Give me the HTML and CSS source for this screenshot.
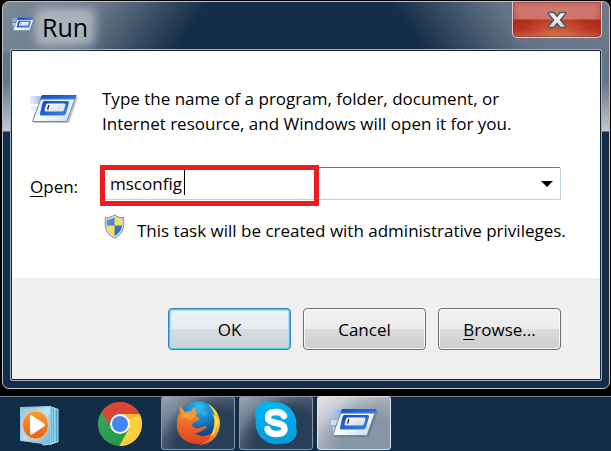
FILE: index.html
```html
<!DOCTYPE html>
<html lang="en">
<head>
<meta charset="utf-8">
<title>Run</title>
<link rel="stylesheet" href="styles.css">
</head>
<body>
<svg class="defs" aria-hidden="true">
  <defs>
    <linearGradient id="blue" x1="0" y1="0" x2="1" y2="1"><stop offset="0" stop-color="#0d49b5"/><stop offset="1" stop-color="#3b86ee"/></linearGradient>
    <linearGradient id="pane" x1="0" y1="0" x2="1" y2="1"><stop offset="0" stop-color="#d4e5fa"/><stop offset=".55" stop-color="#f7fbff"/><stop offset="1" stop-color="#b9d3f4"/></linearGradient>
    <linearGradient id="trail" x1="0" y1="0" x2="1" y2="0"><stop offset="0" stop-color="#b7d4fa" stop-opacity=".35"/><stop offset="1" stop-color="#6fa5ef"/></linearGradient>
    <linearGradient id="field" x1="0" y1="0" x2="1" y2="1"><stop offset="0" stop-color="#fff"/><stop offset="1" stop-color="#d2d5dc"/></linearGradient>
  </defs>
  <symbol id="run-icon" viewBox="0 0 48 30">
    <path d="M0 2h14l-3 8H0z" fill="url(#trail)"/>
    <path d="M1 12h9l-2 5H1zM3 19h5l-3 6H3z" fill="#dceafa" opacity=".8"/>
    <path d="M14 3h34L39 29H4z" fill="#444" opacity=".3"/>
    <path d="M12 1.500h34L37 27.500H2.500z" fill="url(#pane)" stroke="#7c8795"/>
    <path d="M12 1h34.500L45 5.500H10.500z" fill="url(#blue)"/>
    <path d="M14.500 7H37q2.500 0 2 2l-3 10.500q-.5 2-3 2H12q-2.500 0-2-2L12.500 9q.5-2 2-2z" fill="url(#blue)"/>
    <path d="M17.500 9.500H34q1.800 0 1.500 1.500l-1.500 5q-.4 1.500-2.200 1.500H16q-1.800 0-1.500-1.500L16 11q.4-1.500 1.500-1.500z" fill="url(#field)"/>
    <path d="M18.800 11l-1.200 4.500" stroke="#222" stroke-width="1.300"/>
  </symbol>
</svg>
<main class="window">
  <header class="titlebar">
    <svg class="title-icon" aria-hidden="true"><use href="#run-icon"/></svg>
    <h1 class="title">Run</h1>
    <button class="close" type="button" aria-label="Close">
      <svg viewBox="0 0 20 18" aria-hidden="true">
        <defs><linearGradient id="cross" x1="0" y1="0" x2="0" y2="1"><stop offset="0" stop-color="#fff"/><stop offset="1" stop-color="#cfd0d4"/></linearGradient></defs>
        <path d="M1.500 1.500h5.500l3 4 3-4h5.500v1.500L13.500 9l5 6v1.500H13l-3-4-3 4H1.500V15l5-6-5-6z" fill="url(#cross)" stroke="#4d5468" stroke-width="1.400" stroke-linejoin="round"/>
      </svg>
    </button>
  </header>
  <form class="client">
    <div class="content">
      <svg class="program-icon" aria-hidden="true"><use href="#run-icon"/></svg>
      <p class="message">Type the name of a program, folder, document, or<br>Internet resource, and Windows will open it for you.</p>
      <label class="open-label" for="command"><u>O</u>pen:</label>
      <div class="combo">
        <input id="command" type="text" value="msconfig" spellcheck="false">
        <span class="caret"></span>
        <button class="drop" type="button" aria-label="Show recent commands"><svg viewBox="0 0 12 6" aria-hidden="true"><path d="M0 0h12L6 6z"/></svg></button>
        <span class="highlight"></span>
      </div>
      <p class="privileges">
        <svg class="shield" viewBox="0 0 22 26" aria-hidden="true">
          <defs><clipPath id="shield-clip"><path d="M11 3c2 2 5 3 8 3 .5 8-1 13-8 17C4 19 2.500 14 3 6c3 0 6-1 8-3z"/></clipPath>
          <linearGradient id="shield-blue" x1="0" y1="0" x2="1" y2="1"><stop offset="0" stop-color="#6ba7ea"/><stop offset="1" stop-color="#1654b7"/></linearGradient></defs>
          <path d="M11 .8c3 2.500 6 3 9.500 3C21.500 14 20 21 11 25.200 2 21 .5 14 1.500 3.800 5 3.800 8 3.300 11 .8z" fill="#d5d9dd" stroke="#82888e"/>
          <g clip-path="url(#shield-clip)"><path d="M0 0h22v26H0z" fill="#f8dc5c"/><path d="M0 0h11v12H0zM11 12h11v14H11z" fill="url(#shield-blue)"/></g>
        </svg>
        <span>This task will be created with administrative privileges.</span>
      </p>
    </div>
    <footer class="actions">
      <button class="btn btn-default" type="button">OK</button>
      <button class="btn" type="button">Cancel</button>
      <button class="btn" type="button"><u>B</u>rowse...</button>
    </footer>
  </form>
</main>
<nav class="taskbar" aria-label="Taskbar">
  <button class="task" type="button" aria-label="Media Player">
    <svg class="app" viewBox="0 0 44 44" aria-hidden="true">
      <defs><linearGradient id="glass" x1="0" y1="0" x2="1" y2="1"><stop offset="0" stop-color="#88b9d3"/><stop offset=".5" stop-color="#b9deec"/><stop offset="1" stop-color="#72b7d6"/></linearGradient>
      <linearGradient id="orange" x1="0" y1="0" x2="0" y2="1"><stop offset="0" stop-color="#ff9d2e"/><stop offset="1" stop-color="#ed5c12"/></linearGradient></defs>
      <path d="M28 6l10 1v33l-10 1z" fill="#4ba8d0" stroke="#a8def0"/>
      <path d="M25 5l10 1v35l-10 1z" fill="#63b8da" stroke="#c3ebf6"/>
      <path d="M22 5h10v37l-9 1z" fill="#368dbb" stroke="#b8e4f1"/>
      <path d="M.5 5.500l30-1v38l-30-4z" fill="url(#glass)" stroke="#8bd0e6"/>
      <path d="M1 7l29-1v6L1 31z" fill="#fff" opacity=".15"/>
      <ellipse cx="15.500" cy="23" rx="13" ry="14" fill="url(#orange)" stroke="#e8c9a6"/>
      <path d="M10 14.500q0-2 2-1l12 8q2 1.500 0 3l-12 8q-2 1-2-1z" fill="#fff"/>
    </svg>
  </button>
  <button class="task" type="button" aria-label="Chrome">
    <svg class="app" viewBox="0 0 44 44" aria-hidden="true">
      <defs><linearGradient id="chrome-green" x1="0" y1="0" x2="1" y2="1"><stop offset="0" stop-color="#43a85b"/><stop offset="1" stop-color="#119448"/></linearGradient></defs>
      <circle cx="22" cy="22" r="22" fill="url(#chrome-green)"/>
      <path d="M22 12h19.600A22 22 0 0 1 21.300 44L30.700 27z" fill="#ffcd40"/>
      <path d="M3.800 9.700A22 22 0 0 1 41.600 12H22a10 10 0 0 0-8.700 15z" fill="#db4437"/>
      <path d="M22 12h19.600l.8 2L30 17z" fill="#b96b20" opacity=".2"/>
      <circle cx="22" cy="22" r="10" fill="#fff"/><circle cx="22" cy="22" r="8" fill="#4285f4"/>
    </svg>
  </button>
  <button class="task open" type="button" aria-label="Firefox">
    <svg class="app" viewBox="0 0 44 44" aria-hidden="true">
      <defs><radialGradient id="globe" cx=".5" cy=".1" r=".9"><stop offset="0" stop-color="#22b8ee"/><stop offset=".5" stop-color="#147bbf"/><stop offset="1" stop-color="#0a2e68"/></radialGradient>
      <linearGradient id="fox" x1="0" y1="0" x2="0" y2="1"><stop offset="0" stop-color="#f5a33b"/><stop offset=".4" stop-color="#ed722b"/><stop offset="1" stop-color="#db421e"/></linearGradient>
      <linearGradient id="tail" x1="0" y1="0" x2="0" y2="1"><stop offset="0" stop-color="#ffdc3c"/><stop offset=".55" stop-color="#fcbc29"/><stop offset="1" stop-color="#e8561e"/></linearGradient></defs>
      <circle cx="23" cy="20" r="19.500" fill="url(#globe)"/>
      <path d="M20 5q5-3 10 0l-2 4 4 3-2 5-5-4-6-1z" fill="#4fc1e9" opacity=".35"/>
      <path d="M32 3c7 4 11 10 12 18 0 14-9 23-22 23 9-3 14-9 16-18 1-7 0-10-2-14l3 3q-2-7-7-12z" fill="url(#tail)"/>
      <path d="M38 13c3 9 0 18-6 24l6-4 4-12z" fill="#fff37a" opacity=".7"/>
      <path d="M4 5l5 6q4-1 6-1 2-3 4-4 0 4 2 6l-1 3q4 1 3 4-3 2-6 3l-1 3q5 4 10 1 4-2 5 0-1 2-4 3-4 4-9 3 7 5 14 2 3-1 5-3-5 12-16 12C9 43 0 34 1 23 1 16 3 13 4 12q-1-4 0-7z" fill="url(#fox)"/>
      <path d="M5 13q5-2 11 0 3-1 4-3l-1 6q-3 3-6 3-4-3-8-2z" fill="#f8b34b" opacity=".5"/>
    </svg>
  </button>
  <button class="task open" type="button" aria-label="Skype">
    <svg class="app" viewBox="0 0 44 44" aria-hidden="true">
      <defs><linearGradient id="sky" x1="0" y1="0" x2="0" y2="1"><stop offset="0" stop-color="#00b5f5"/><stop offset="1" stop-color="#079bd9"/></linearGradient></defs>
      <path d="M2 18A12.500 12.500 0 0 1 18 1.500 21 21 0 0 1 42 26 12.500 12.500 0 0 1 28 42.500 21 21 0 0 1 2 18z" fill="url(#sky)"/>
      <path d="M30 15q-2-4-8-4-8 0-8 5.500 0 4 8 5.500 8.500 1.500 8.500 5.500 0 5.500-8.500 5.500-7 0-8.500-5" fill="none" stroke="#fff" stroke-width="6.500" stroke-linecap="round"/>
    </svg>
  </button>
  <button class="task open active" type="button" aria-label="Run"><svg class="run-task" aria-hidden="true"><use href="#run-icon"/></svg></button>
</nav>
</body>
</html>
```
FILE: styles.css
```css
* { box-sizing: border-box; }
body {
  margin: 0;
  min-height: 100vh;
  display: flex;
  flex-direction: column;
  background: #000;
  color: #000;
  font: 17px/25px "Open Sans", "Noto Sans", sans-serif;
}
h1, p { margin: 0; }
button, input { font: inherit; color: inherit; }
svg { display: block; flex: none; }
u { text-underline-offset: 3px; text-decoration-thickness: 1px; }
.defs { position: absolute; width: 0; height: 0; }

.window {
  margin: 1px 1px 7px 2px;
  padding: 0 7px 7px;
  border: 1px solid #b8c1ca;
  border-radius: 7px;
  background-color: #142d48;
  background-image:
    linear-gradient(to bottom, transparent 50px, #657688 51px, #657688 80px, #c3c8cf 129px, #142d48 130px),
    linear-gradient(to bottom, transparent 50px, #657688 51px, #657688 80px, #c3c8cf 129px, #142d48 130px),
    linear-gradient(125deg, #7c8997 0px, #6b7a8b 80px, #142d48 170px),
    linear-gradient(235deg, #6b7b8d 0px, #657587 90px, #142d48 180px);
  background-position: left top, right top, left top, right top;
  background-size: 8px 100%, 8px 100%, 50% 130px, 50% 130px;
  background-repeat: no-repeat;
}
.titlebar {
  display: flex;
  align-items: flex-start;
  gap: 7px;
  height: 47px;
  padding-left: 2px;
}
.title-icon { width: 23px; height: 15px; margin-top: 15px; }
.title {
  position: relative;
  z-index: 0;
  margin-top: 8px;
  font-size: 25px;
  font-weight: 400;
  line-height: 34px;
}
.title::before {
  content: "";
  position: absolute;
  z-index: -1;
  inset: -2px -7px;
  border-radius: 8px;
  background: #c5ccd0b0;
  filter: blur(5px);
}
.close {
  display: grid;
  place-items: center;
  width: 90px;
  height: 36px;
  margin-left: auto;
  padding: 0;
  border: 1px solid #e2c9c8;
  border-top: 0;
  border-radius: 0 0 5px 5px;
  background:
    radial-gradient(ellipse at 50% 100%, #e6a06a88, #0000 55%),
    linear-gradient(#d38078 0, #ce7065 17px, #b42d1b 18px, #b93722 28px, #cb6b4e 100%);
  box-shadow: inset 0 0 0 1px #8d292766, inset 0 0 8px #8c1c1c77;
}
.close svg { width: 20px; height: 18px; }

.client {
  border: 1px solid #a3afba;
  border-radius: 2px;
  outline: 1px solid #172638;
  outline-offset: -2px;
  padding: 1px;
  background: #fff;
}
.content {
  display: grid;
  grid-template-columns: 72px minmax(0, 1fr);
  padding: 35px 39px 35px 18px;
}
.program-icon { width: 48px; height: 30px; margin-top: 8px; }
.open-label { align-self: center; margin-top: 36px; }
.combo {
  position: relative;
  display: flex;
  height: 33px;
  margin: 31px 0 0 -1px;
  border: 1px solid #b5d2e8;
  border-top-color: #4282b4;
  border-radius: 2px;
}
.combo input {
  flex: 1;
  min-width: 0;
  padding: 0 8px;
  border: 0;
  outline: 0;
  background: none;
}
.caret {
  position: absolute;
  left: 82px;
  top: 2px;
  width: 1px;
  height: 25px;
  background: #000;
}
.drop {
  display: grid;
  place-items: center;
  width: 26px;
  padding: 0;
  border: 0;
  background: none;
}
.drop svg { width: 12px; height: 6px; }
.highlight {
  position: absolute;
  left: -2px;
  top: -3px;
  width: 219px;
  height: 41px;
  border: 5px solid #ed1c24;
  pointer-events: none;
}
.privileges {
  grid-column: 2;
  display: flex;
  gap: 12px;
  margin-top: 18px;
  padding-left: 2px;
  white-space: nowrap;
}
.shield { width: 21px; height: 25px; margin-top: -4px; }
.actions {
  display: flex;
  justify-content: flex-end;
  gap: 12px;
  padding: 30px 39px 29px 18px;
  background: #f0f0f0;
}
.btn {
  width: 123px;
  height: 42px;
  padding: 0;
  border: 1px solid #707070;
  border-radius: 4px;
  background: linear-gradient(#f3f3f3 0, #ebebeb 49%, #dcdcdc 50%, #cdcdcd 100%);
  box-shadow: inset 0 0 0 1px #fafafa;
}
.btn-default {
  border-color: #3c7fb1;
  background: linear-gradient(#f2f4f4 0, #e7ebec 49%, #d7dcdf 50%, #c9d2d5 100%);
  box-shadow: inset 0 0 0 1px #49c8f5, inset 0 0 0 2px #a5dff2;
}

.taskbar {
  flex: 1;
  display: flex;
  gap: 4px;
  padding: 0 5px 1px;
  border-top: 1px solid #74808d;
  background: #132d48;
}
.task {
  display: grid;
  place-items: center;
  width: 74px;
  padding: 0;
  border: 0;
  background: none;
}
.task.open {
  border: 1px solid #8b98a7;
  border-radius: 3px;
  margin-top: -1px;
  background:
    radial-gradient(ellipse at 75% 100%, #293e57 50%, #293e5700 75%),
    linear-gradient(145deg, #9aa5b1, #536276 45%, #35475e);
}
.task.active {
  border-color: #dfe3e7;
  background:
    radial-gradient(ellipse at 75% 100%, #8795a4 40%, #8795a400 75%),
    linear-gradient(145deg, #e3e5e8, #abb3bd 50%, #8997a5);
}
.app { width: 44px; height: 44px; }
.run-task { width: 48px; height: 30px; }
```
